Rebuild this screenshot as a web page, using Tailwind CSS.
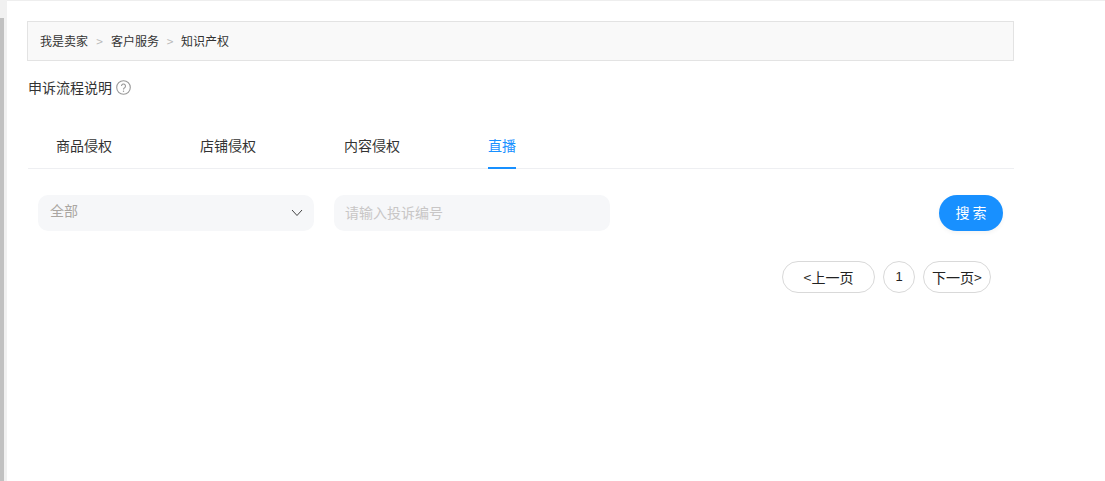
<!DOCTYPE html>
<html>

<head>
    <meta charset="utf-8" />
    <title>知识产权</title>
    <script src="https://cdn.jsdelivr.net/npm/@tailwindcss/browser@4"></script>
</head>

<body class="bg-white h-screen overflow-hidden flex font-['Noto_Sans_CJK_SC','Liberation_Sans',sans-serif] text-[#333]">
    <!-- left scrollbar strip -->
    <div class="w-[7px] flex-shrink-0 bg-[#f1f1f1] pt-[18px]">
        <div class="w-[4px] h-full bg-[#c1c1c1]"></div>
    </div>

    <main class="flex-1 border-t border-[#eeeeee]">
        <div class="ml-[20px] mt-[20px] w-[987px] h-[40px] bg-[#f9f9f9] border border-[#e3e3e3] flex items-center pl-[12px] text-[12px]">
            <span>我是卖家</span>
            <span class="w-[23px] text-center text-[#bbbbbb]">&gt;</span>
            <span>客户服务</span>
            <span class="w-[22px] text-center text-[#bbbbbb]">&gt;</span>
            <span>知识产权</span>
        </div>

        <div class="ml-[21px] mt-[16px] h-[20px] flex items-center text-[14px] leading-[20px]">
            <span>申诉流程说明</span>
            <svg class="ml-[4px]" width="15" height="15" viewBox="0 0 15 15" fill="none" stroke="#999999">
                <circle cx="7.5" cy="7.5" r="6.8" stroke-width="1.1" />
                <path d="M5.5 6a2 2 0 1 1 3.1 1.7c-.8.5-1.1.9-1.1 1.7" stroke-width="1.1" />
                <circle cx="7.5" cy="11.2" r=".7" fill="#999999" stroke="none" />
            </svg>
        </div>

        <div class="ml-[21px] mt-[28px] w-[986px] h-[44px] border-b border-[#eeeff2] flex pl-[28px] gap-[88px] text-[14px]">
            <div class="pt-[10px]">商品侵权</div>
            <div class="pt-[10px]">店铺侵权</div>
            <div class="pt-[10px]">内容侵权</div>
            <div class="pt-[10px] h-[44px] text-[#1890ff] border-b-2 border-[#1890ff]">直播</div>
        </div>

        <div class="ml-[31px] mt-[26px] w-[965px] flex items-center gap-[20px] text-[14px]">
            <div class="w-[276px] h-[36px] bg-[#f6f7f9] rounded-[10px] flex items-center justify-between pl-[12px] pr-[11px] text-[#aaa6a2]">
                <span class="-mt-[5px]">全部</span>
                <svg width="12" height="8" viewBox="0 0 12 8" fill="none" stroke="#444444" stroke-width="1">
                    <path d="M1 1l5 5.5L11 1" />
                </svg>
            </div>
            <input type="text" placeholder="请输入投诉编号" class="w-[276px] h-[36px] bg-[#f6f7f9] rounded-[10px] pl-[11px] pr-[12px] pb-[2px] outline-none placeholder:text-[#c8c6c6]" />
            <button class="ml-auto w-[64px] h-[36px] pb-[2px] rounded-[18px] bg-[#1890ff] text-white shadow-[0_2px_4px_rgba(0,0,0,0.05)]">搜 索</button>
        </div>

        <div class="mt-[30px] mr-[114px] flex justify-end gap-[8px] text-[14px] text-[#222]">
            <button class="w-[93px] h-[32px] rounded-[16px] border border-[#d9d9d9]">&lt;上一页</button>
            <button class="w-[32px] h-[32px] rounded-[16px] border border-[#d9d9d9] text-[13px] font-['Liberation_Sans',sans-serif]">1</button>
            <button class="w-[68px] h-[32px] rounded-[16px] border border-[#d9d9d9]">下一页&gt;</button>
        </div>
    </main>
</body>

</html>
